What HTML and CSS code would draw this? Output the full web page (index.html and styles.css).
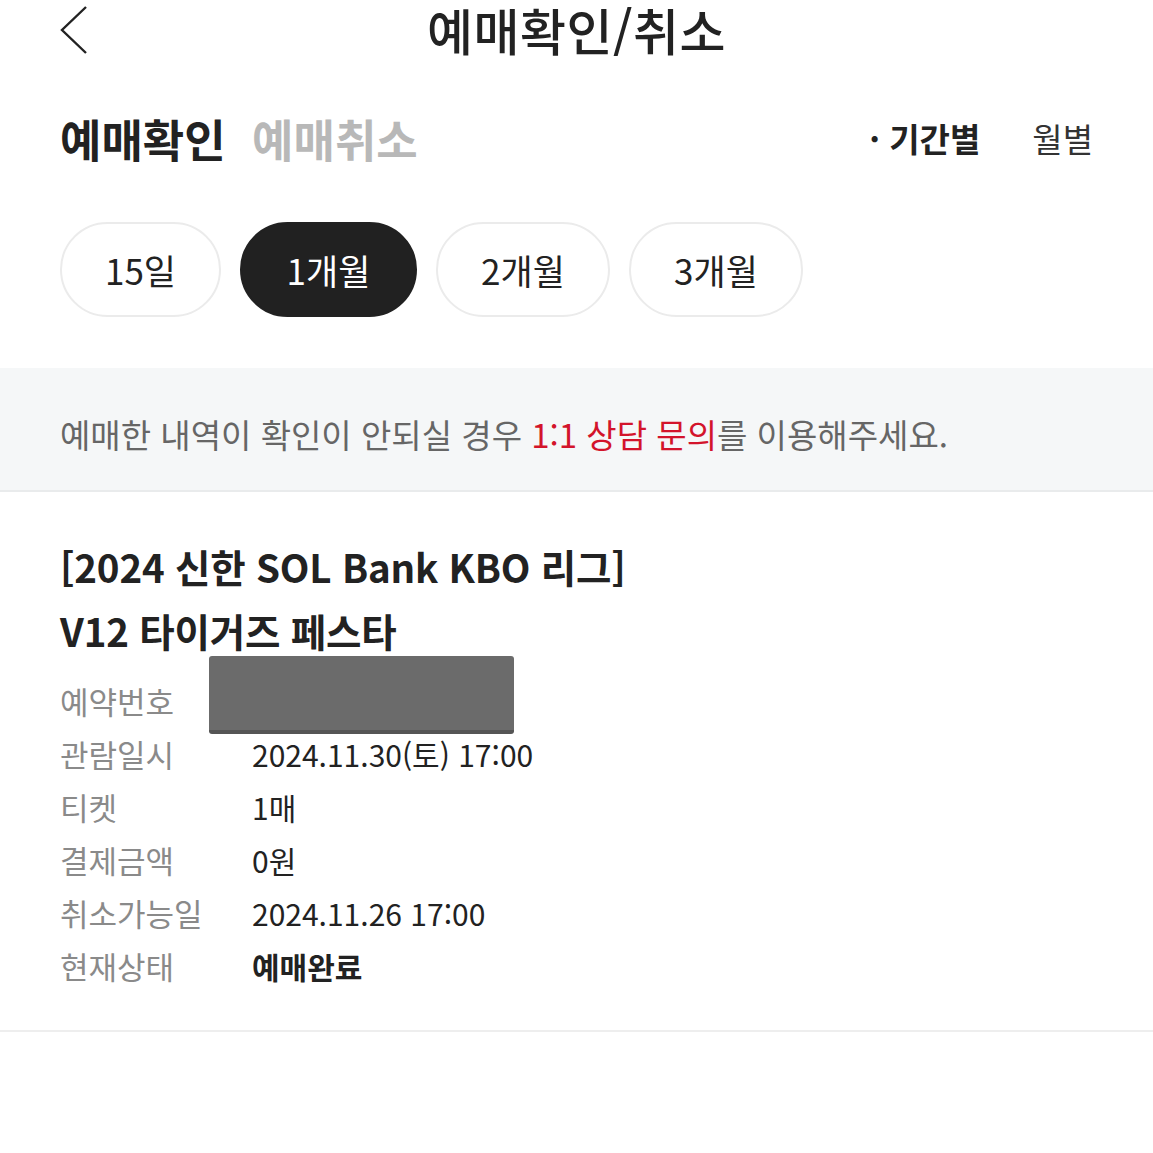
FILE: index.html
```html
<!DOCTYPE html>
<html lang="ko">
<head>
  <meta charset="UTF-8">
  <title>예매확인/취소</title>
  <link rel="stylesheet" href="styles.css">
</head>
<body>
  <header class="top-bar">
    <a class="back" href="#">
      <svg width="30" height="50" viewBox="0 0 30 50"><polyline points="27,3 3,26 27,49" fill="none" stroke="#222" stroke-width="2.4"/></svg>
    </a>
    <h1>예매확인/취소</h1>
    <span></span>
  </header>

  <div class="tabs">
    <div class="tab-left">
      <span class="tab active">예매확인</span>
      <span class="tab">예매취소</span>
    </div>
    <div class="tab-right">
      <span class="period active">· 기간별</span>
      <span class="period">월별</span>
    </div>
  </div>

  <div class="chips">
    <button class="chip chip-15">15일</button>
    <button class="chip selected">1개월</button>
    <button class="chip">2개월</button>
    <button class="chip">3개월</button>
  </div>

  <div class="notice">
    예매한 내역이 확인이 안되실 경우 <span class="red">1:1 상담 문의</span>를 이용해주세요.
  </div>

  <!-- 예매 내역 -->
  <div class="booking">
    <h2>[2024 신한 SOL Bank KBO 리그]<br>V12 타이거즈 페스타</h2>
    <div class="row">
      <span class="label">예약번호</span>
      <span class="value"><span class="masked"></span></span>
    </div>
    <div class="row">
      <span class="label">관람일시</span>
      <span class="value">2024.11.30(토) 17:00</span>
    </div>
    <div class="row">
      <span class="label">티켓</span>
      <span class="value">1매</span>
    </div>
    <div class="row">
      <span class="label">결제금액</span>
      <span class="value">0원</span>
    </div>
    <div class="row">
      <span class="label">취소가능일</span>
      <span class="value">2024.11.26 17:00</span>
    </div>
    <div class="row">
      <span class="label">현재상태</span>
      <span class="value bold">예매완료</span>
    </div>
  </div>
</body>
</html>
```

FILE: styles.css
```css
* { box-sizing: border-box; }
body {
  margin: 0;
  font-family: "Noto Sans CJK KR", "Noto Sans", sans-serif;
  color: #222;
  background: #fff;
}
.top-bar {
  display: grid;
  grid-template-columns: 1fr auto 1fr;
  align-items: center;
  height: 58px;
}
.back {
  display: flex;
  padding-left: 59px;
}
.top-bar h1 {
  margin: 0;
  font-size: 50px;
  font-weight: 500;
  line-height: 58px;
  letter-spacing: 0.5px;
}
.tabs {
  display: flex;
  justify-content: space-between;
  align-items: center;
  height: 60px;
  margin-top: 50px;
  padding: 0 60px;
}
.tab {
  font-size: 45px;
  font-weight: 700;
  color: #b8b8b8;
  margin-right: 22px;
}
.tab.active { color: #222; }
.tab-right {
  display: flex;
  gap: 52px;
}
.period {
  font-size: 33px;
  color: #333;
}
.period.active { font-weight: 700; color: #222; }
.chips {
  display: flex;
  gap: 19px;
  margin-top: 54px;
  padding: 0 60px;
}
.chip {
  height: 95px;
  width: 174px;
  border: 2px solid #ebebeb;
  border-radius: 48px;
  background: #fff;
  font-family: inherit;
  font-size: 35px;
  color: #222;
}
.chip-15 { width: 161px; }
.chip.selected {
  width: 177px;
  background: #212121;
  border-color: #212121;
  color: #fff;
}
.notice {
  margin-top: 51px;
  height: 124px;
  padding: 43px 60px 0;
  background: #f5f7f8;
  border-bottom: 2px solid #e9ebec;
  font-size: 33px;
  color: #666;
  line-height: 46px;
  white-space: nowrap;
}
.red { color: #d3142b; }
.booking {
  padding: 42px 60px 38px;
  border-bottom: 2px solid #eeeeee;
}
.booking h2 {
  margin: 0 0 12px;
  font-size: 38.5px;
  font-weight: 700;
  line-height: 64px;
  letter-spacing: -0.2px;
}
.row {
  display: flex;
  height: 53px;
  align-items: center;
}
.label {
  width: 192px;
  font-size: 31px;
  color: #8a8a8a;
}
.value {
  position: relative;
  font-size: 30px;
  color: #222;
}
.value.bold { font-weight: 700; }
.masked {
  position: absolute;
  left: -43px;
  top: -45px;
  width: 305px;
  height: 78px;
  background: #6b6b6b;
  border-bottom: 4px solid #555;
  border-radius: 3px;
}
```
